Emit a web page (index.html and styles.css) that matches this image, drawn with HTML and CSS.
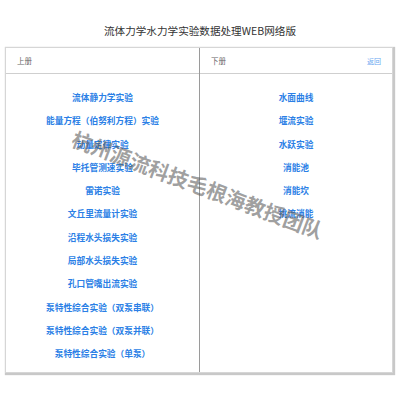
FILE: index.html
```html
<!DOCTYPE html>
<html lang="zh-CN">
<head>
<meta charset="utf-8">
<title>流体力学水力学实验数据处理WEB网络版</title>
<link rel="stylesheet" href="styles.css">
</head>
<body>
<h1 class="title">流体力学水力学实验数据处理WEB网络版</h1>
<div class="board">
  <section class="panel panel-left">
    <div class="panel-head"><span>上册</span></div>
    <ul class="list">
      <li><a href="#">流体静力学实验</a></li>
      <li><a href="#">能量方程（伯努利方程）实验</a></li>
      <li><a href="#">动量定律实验</a></li>
      <li><a href="#">毕托管测速实验</a></li>
      <li><a href="#">雷诺实验</a></li>
      <li><a href="#">文丘里流量计实验</a></li>
      <li><a href="#">沿程水头损失实验</a></li>
      <li><a href="#">局部水头损失实验</a></li>
      <li><a href="#">孔口管嘴出流实验</a></li>
      <li><a href="#">泵特性综合实验（双泵串联）</a></li>
      <li><a href="#">泵特性综合实验（双泵并联）</a></li>
      <li><a href="#">泵特性综合实验（单泵）</a></li>
    </ul>
  </section>
  <section class="panel panel-right">
    <div class="panel-head"><span>下册</span><a class="back" href="#">返回</a></div>
    <ul class="list">
      <li><a href="#">水面曲线</a></li>
      <li><a href="#">堰流实验</a></li>
      <li><a href="#">水跃实验</a></li>
      <li><a href="#">消能池</a></li>
      <li><a href="#">消能坎</a></li>
      <li><a href="#">挑流消能</a></li>
    </ul>
  </section>
</div>
<div class="watermark">杭州源流科技毛根海教授团队</div>
</body>
</html>
```
FILE: styles.css
```css
html, body {
  margin: 0;
  padding: 0;
  background: #ffffff;
}
body {
  font-family: "Noto Sans CJK SC", "Noto Sans", sans-serif;
  width: 400px;
  height: 400px;
  position: relative;
  overflow: hidden;
}
.title {
  margin: 23px 0 0 0;
  font-size: 10.6px;
  line-height: 16px;
  font-weight: 400;
  color: #333333;
  text-align: center;
}
.board {
  margin: 8px 0 0 5px;
  width: 388px;
  height: 326px;
  box-sizing: border-box;
  border: 1px solid #d6d6d6;
  box-shadow: 1px 1px 1px 1px #c8c8c8;
  display: grid;
  grid-template-columns: 194px 1fr;
}
.panel-left {
  border-right: 1px solid #9a9a9a;
}
.panel-head {
  height: 25px;
  border-bottom: 1px solid #cfcfcf;
  display: flex;
  align-items: center;
  justify-content: space-between;
  padding: 0 11px 0 11px;
  font-size: 7.5px;
  color: #666666;
}
.back {
  font-size: 7px;
  color: #6aa8f0;
  text-decoration: none;
}
.list {
  list-style: none;
  margin: 0;
  padding: 12px 0 0 0;
  display: flex;
  flex-direction: column;
  align-items: center;
}
.list li {
  height: 23.3px;
  line-height: 23.3px;
  font-size: 8.7px;
  font-weight: 700;
}
.list a {
  color: #2b7fe6;
  text-decoration: none;
}
.watermark {
  position: absolute;
  left: 64px;
  top: 170px;
  width: 268px;
  height: 28px;
  line-height: 28px;
  text-align: center;
  font-size: 20.5px;
  font-weight: 700;
  color: rgba(95, 95, 95, 0.6);
  transform: rotate(20.6deg);
  transform-origin: 50% 50%;
  white-space: nowrap;
  pointer-events: none;
}
```
